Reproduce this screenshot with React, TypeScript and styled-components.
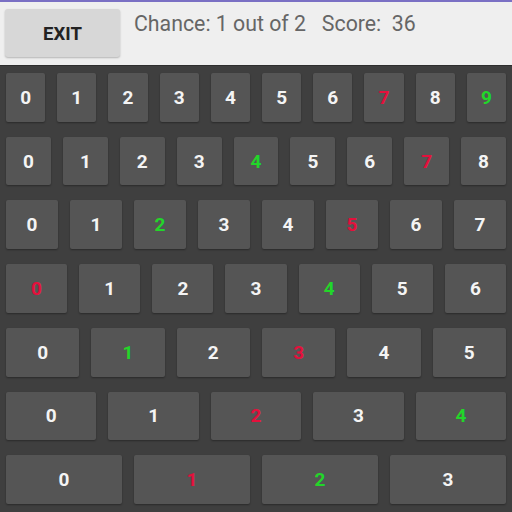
import React from "react";
import styled, { createGlobalStyle } from "styled-components";

const Global = createGlobalStyle`
  html, body { margin: 0; padding: 0; background: #3e3e3e; }
  #root { width: 512px; height: 512px; overflow: hidden; }
  * { box-sizing: border-box; }
`;

const Screen = styled.div`
  width: 512px;
  height: 512px;
  display: flex;
  flex-direction: column;
  font-family: Roboto, "Liberation Sans", sans-serif;
`;

const TopBar = styled.div`
  height: 65px;
  flex: none;
  background: #efefef;
  border-top: 2px solid #7a70c4;
  display: flex;
  align-items: flex-start;
  padding: 7px 0 0 5px;
`;

const ExitButton = styled.button`
  width: 115px;
  height: 48px;
  border: none;
  border-radius: 3px;
  background: #d7d7d7;
  box-shadow: 0 1px 2px rgba(0, 0, 0, 0.25);
  font-family: Roboto, "Liberation Sans", sans-serif;
  font-weight: 700;
  font-size: 18.5px;
  color: #222;
  padding: 0;
  padding-top: 2px;
`;

const Status = styled.div`
  margin-left: 14px;
  margin-top: 2px;
  font-size: 21.3px;
  color: #666;
  white-space: pre;
  line-height: 26px;
`;

const Board = styled.div`
  flex: 1;
  display: flex;
  flex-direction: column;
  background: #3f3f3f;
  border-top: 1px solid #2e2e2e;
`;

const Row = styled.div`
  flex: 1;
  display: flex;
`;

const Cell = styled.div`
  flex: 1;
  padding: 7px 6px 8px;
  display: flex;
`;

type Tone = "white" | "red" | "green";

const Key = styled.div<{ $tone: Tone }>`
  flex: 1;
  background: #555555;
  border-radius: 2px;
  box-shadow: 0 1px 2px rgba(0, 0, 0, 0.35);
  display: flex;
  align-items: center;
  justify-content: center;
  font-size: 19px;
  font-weight: 700;
  color: ${(p) =>
    p.$tone === "red" ? "#e4103c" : p.$tone === "green" ? "#22d62a" : "#f4f4f4"};
`;

const rows: { n: number; red: number; green: number }[] = [
  { n: 10, red: 7, green: 9 },
  { n: 9, red: 7, green: 4 },
  { n: 8, red: 5, green: 2 },
  { n: 7, red: 0, green: 4 },
  { n: 6, red: 3, green: 1 },
  { n: 5, red: 2, green: 4 },
  { n: 4, red: 1, green: 2 },
];

export default function App() {
  return (
    <>
      <Global />
      <Screen>
        <TopBar>
          <ExitButton>EXIT</ExitButton>
          <Status>{"Chance: 1 out of 2   Score:  36"}</Status>
        </TopBar>
        <Board>
          {rows.map((r, ri) => (
            <Row key={ri}>
              {Array.from({ length: r.n }, (_, i) => (
                <Cell key={i}>
                  <Key $tone={i === r.red ? "red" : i === r.green ? "green" : "white"}>{i}</Key>
                </Cell>
              ))}
            </Row>
          ))}
        </Board>
      </Screen>
    </>
  );
}
